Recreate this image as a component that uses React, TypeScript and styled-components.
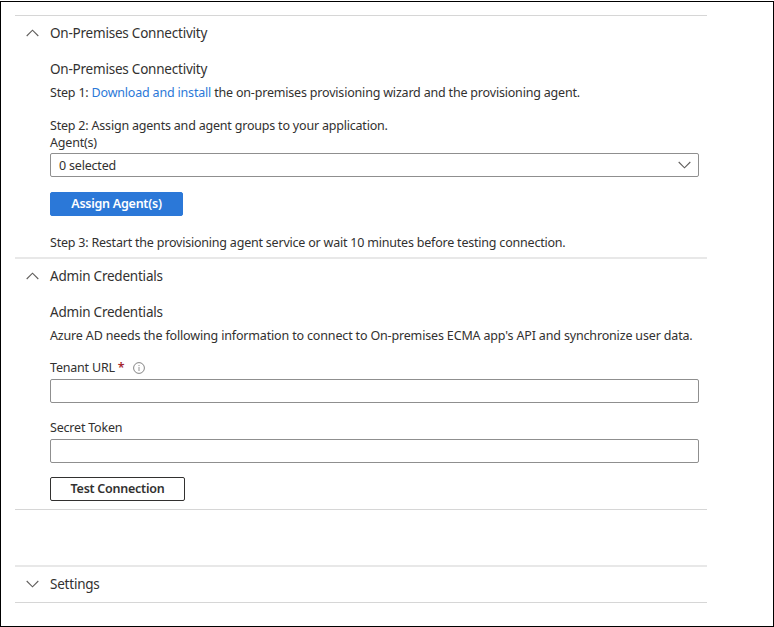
import React from "react";

import styled, { createGlobalStyle } from "styled-components";

const GlobalStyle = createGlobalStyle`
  * {
    box-sizing: border-box;
  }

  body {
    margin: 0;
    background: #fff;
    font-family: "Noto Sans", "Open Sans", sans-serif;
    color: #323130;
  }
`;

const Page = styled.div`
  width: 774px;
  height: 626px;
  margin-top: 1px;
  padding: 13px 66px 0 14px;
  border: 1px solid #000;
`;

const Divider = styled.hr<{ $thick?: boolean }>`
  height: ${({ $thick }) => ($thick ? 2 : 1)}px;
  margin: 0;
  border: none;
  background: ${({ $thick }) => ($thick ? "#e8e8e8" : "#d6d6d6")};
`;

const Spacer = styled.div`
  height: 55px;
`;

const SectionHeader = styled.div`
  display: flex;
  align-items: center;
  gap: 11px;
  height: 35px;
  padding: 0 0 2px 11px;
`;

const Title = styled.span`
  font-size: 13.5px;
  line-height: 20px;
  letter-spacing: -0.22px;
  white-space: nowrap;
`;

const SectionBody = styled.div<{ $height: number }>`
  display: flex;
  flex-direction: column;
  align-items: flex-start;
  height: ${({ $height }) => $height}px;
  padding: 8px 8px 0 35px;
`;

const Text = styled.p<{ $top?: number; $spacing?: number }>`
  margin: ${({ $top }) => $top ?? 0}px 0 0;
  font-size: 12.5px;
  line-height: 17px;
  letter-spacing: ${({ $spacing }) => $spacing ?? -0.2}px;
  white-space: nowrap;
`;

const Link = styled.a`
  color: #2b78d8;
  text-decoration: none;
`;

const Label = styled.label<{ $top?: number }>`
  display: flex;
  align-items: center;
  margin-top: ${({ $top }) => $top ?? 0}px;
  font-size: 12.5px;
  line-height: 17px;
  letter-spacing: -0.2px;
`;

const Required = styled.span`
  margin: 0 9px 0 3px;
  font-weight: 600;
  color: #a4262c;
`;

const Select = styled.div`
  display: flex;
  align-items: center;
  justify-content: space-between;
  width: 100%;
  height: 24px;
  margin-top: 2px;
  padding: 0 7px 0 8px;
  border: 1px solid #8f8f8f;
  border-radius: 2px;
`;

const Input = styled.input`
  width: 100%;
  height: 24px;
  margin: 3px 0 0;
  border: 1px solid #8f8f8f;
  border-radius: 2px;
`;

const Button = styled.button<{ $primary?: boolean; $top: number }>`
  width: ${({ $primary }) => ($primary ? 133 : 135)}px;
  height: 24px;
  margin: ${({ $top }) => $top}px 0 0;
  padding: 0;
  border: 1px solid ${({ $primary }) => ($primary ? "#2b78d8" : "#323130")};
  border-radius: 2px;
  background: ${({ $primary }) => ($primary ? "#2b78d8" : "#fff")};
  color: ${({ $primary }) => ($primary ? "#fff" : "#323130")};
  font: 600 12.5px/20px "Noto Sans", "Open Sans", sans-serif;
  letter-spacing: -0.25px;
`;

interface ChevronProps {
  up?: boolean;
}

function Chevron({ up }: ChevronProps) {
  return (
    <svg width="13" height="8" viewBox="0 0 13 8" fill="none">
      <path
        d={up ? "M0.7 7L6.5 1.2L12.3 7" : "M0.7 1L6.5 6.8L12.3 1"}
        stroke="#605e5c"
        strokeWidth="1.1"
      />
    </svg>
  );
}

function InfoIcon() {
  return (
    <svg width="12" height="12" viewBox="0 0 12 12" fill="none">
      <circle cx="6" cy="6" r="5.4" stroke="#777" strokeWidth="0.9" />
      <path d="M6 5V9M6 3V4.1" stroke="#888" strokeWidth="0.9" />
    </svg>
  );
}

export default function App() {
  return (
    <>
      <GlobalStyle />
      <Page>
        <Divider />
        <SectionHeader>
          <Chevron up />
          <Title>On-Premises Connectivity</Title>
        </SectionHeader>
        <SectionBody $height={206}>
          <Title>On-Premises Connectivity</Title>
          <Text $top={5} $spacing={-0.19}>
            Step 1: <Link>Download and install</Link> the on-premises
            provisioning wizard and the provisioning agent.
          </Text>
          <Text $top={16}>
            Step 2: Assign agents and agent groups to your application.
          </Text>
          <Label>Agent(s)</Label>
          <Select>
            <Text>0 selected</Text>
            <Chevron />
          </Select>
          <Button $primary $top={15}>
            Assign Agent(s)
          </Button>
          <Text $top={18} $spacing={-0.21}>
            Step 3: Restart the provisioning agent service or wait 10 minutes
            before testing connection.
          </Text>
        </SectionBody>
        <Divider $thick />
        <SectionHeader>
          <Chevron up />
          <Title>Admin Credentials</Title>
        </SectionHeader>
        <SectionBody $height={215}>
          <Title>Admin Credentials</Title>
          <Text $top={5} $spacing={-0.16}>
            Azure AD needs the following information to connect to On-premises
            ECMA app's API and synchronize user data.
          </Text>
          <Label $top={15}>
            Tenant URL<Required>*</Required>
            <InfoIcon />
          </Label>
          <Input />
          <Label $top={16}>Secret Token</Label>
          <Input />
          <Button $top={14}>Test Connection</Button>
        </SectionBody>
        <Divider />
        <Spacer />
        <Divider $thick />
        <SectionHeader>
          <Chevron />
          <Title>Settings</Title>
        </SectionHeader>
        <Divider />
      </Page>
    </>
  );
}
